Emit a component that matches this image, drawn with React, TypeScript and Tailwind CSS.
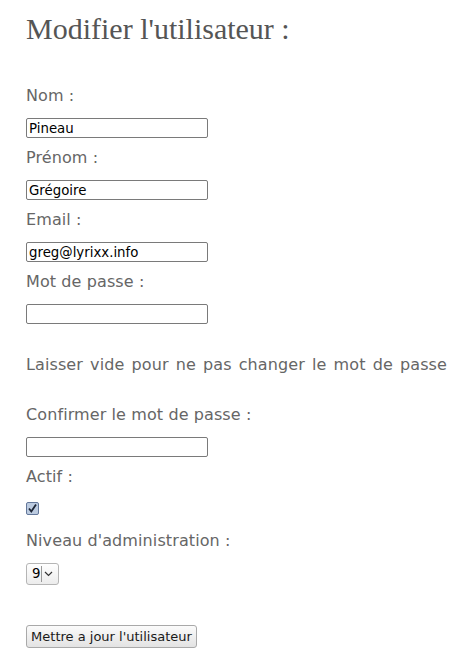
import { useState } from 'react';

const label = "block font-['DejaVu_Sans',sans-serif] text-[16px] leading-[20px] tracking-[0.1px] text-[#666]";
const field =
  "block w-[182px] h-[20px] border border-[#7a7a7a] rounded-[2px] bg-white px-[2px] font-['DejaVu_Sans',sans-serif] text-[13.33px] text-black outline-none";

function Field({ name, value, type = 'text' }: { name: string; value: string; type?: string }) {
  const [v, setV] = useState(value);
  return (
    <div className="flex flex-col">
      <label className={label}>{name} :</label>
      <input type={type} value={v} onChange={(e) => setV(e.target.value)} className={`${field} mt-[12px]`} />
    </div>
  );
}

export default function App() {
  return (
    <div className="min-h-screen bg-white pl-[26px] pt-[12px]">
      <h1 className="font-['Liberation_Serif',serif] text-[30px] leading-[34px] text-[#555] font-normal">
        Modifier l'utilisateur :
      </h1>

      <form className="mt-[40px] flex flex-col gap-[10px]" onSubmit={(e) => e.preventDefault()}>
        <Field name="Nom" value="Pineau" />
        <Field name="Prénom" value="Grégoire" />
        <Field name="Email" value="greg@lyrixx.info" />
        <Field name="Mot de passe" value="" type="password" />
      </form>

      <p className={`${label} mt-[31px] w-[421px] text-justify [text-align-last:justify]`}>
        Laisser vide pour ne pas changer le mot de passe
      </p>

      <div className="mt-[30px] flex flex-col gap-[10px]">
        <Field name="Confirmer le mot de passe" value="" type="password" />
        <div className="flex flex-col">
          <label className={label}>Actif :</label>
          <span className="mt-[15px] flex h-[13px] w-[13px] items-center justify-center rounded-[2px] border border-[#63779a] bg-[#bccbe0]">
            <svg width="11" height="11" viewBox="0 0 11 11">
              <path d="M2 5.5 L4.3 8.5 L9 1.5" fill="none" stroke="#1d2636" strokeWidth="1.8" />
            </svg>
          </span>
        </div>
      </div>

      <div className="mt-[16px] flex flex-col">
        <label className={label}>Niveau d'administration :</label>
        <div className="mt-[12px] flex h-[22px] w-[33px] items-center rounded-[3px] border border-[#b5b5b5] bg-gradient-to-b from-white to-[#ececec] pl-[5px] font-['DejaVu_Sans',sans-serif] text-[13.33px] text-black">
          <span>9</span>
          <span className="ml-[1px] h-[16px] w-px bg-[#999]" />
          <svg className="ml-[2px]" width="9" height="6" viewBox="0 0 9 6">
            <path d="M1 1 L4.5 4.5 L8 1" fill="none" stroke="#333" strokeWidth="1.2" />
          </svg>
        </div>
      </div>

      <button
        type="button"
        className="mt-[40px] block h-[23px] w-[171px] rounded-[3px] border border-[#a9a9a9] bg-gradient-to-b from-[#fbfbfb] to-[#e3e3e3] font-['DejaVu_Sans',sans-serif] text-[13px] text-[#1a1a1a]"
      >
        Mettre a jour l'utilisateur
      </button>
    </div>
  );
}
